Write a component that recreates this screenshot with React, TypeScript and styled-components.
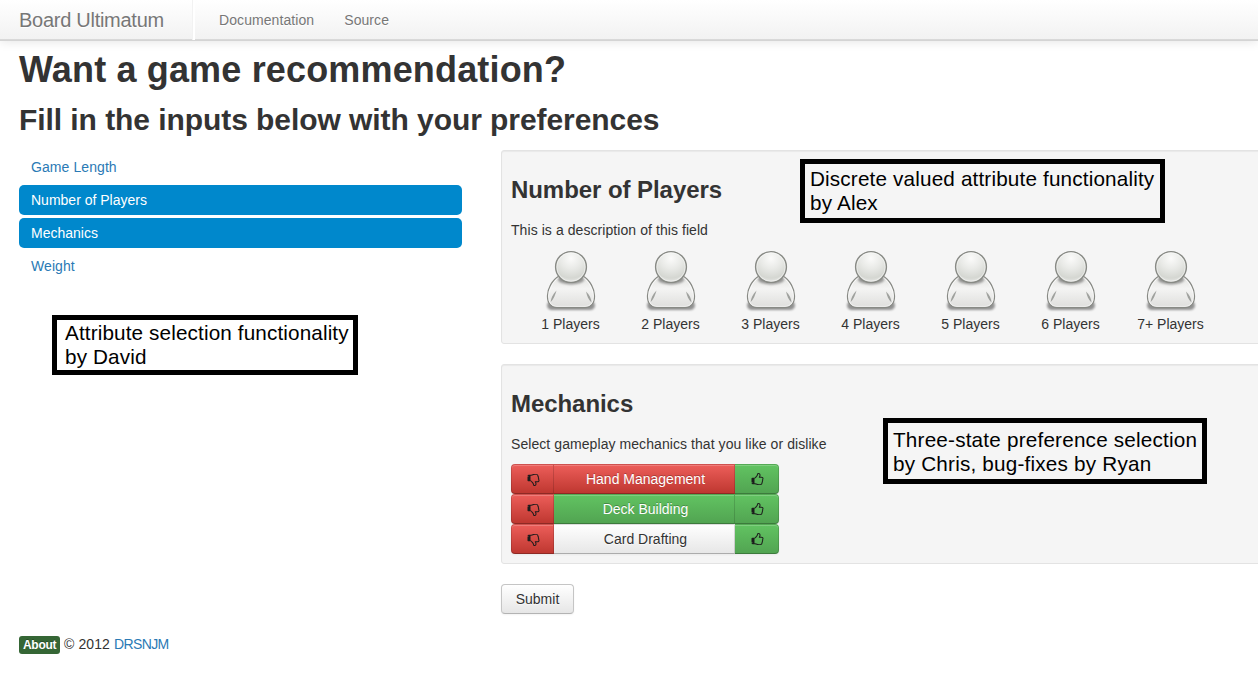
import React from "react";
import styled, { createGlobalStyle, css } from "styled-components";

const GlobalStyle = createGlobalStyle`
  *, *::before, *::after { box-sizing: border-box; }
  html, body { margin: 0; overflow: hidden; }
  body {
    background: #fff;
    color: #333;
    font-family: "Liberation Sans", Arial, sans-serif;
    font-size: 14px;
    line-height: 20px;
  }
  h1, h2, h3, p, ul { margin: 0; padding: 0; }
`;

const Page = styled.div`
  position: relative;
  width: 1258px;
  height: 697px;
  overflow: hidden;
`;

const Navbar = styled.nav`
  display: flex;
  height: 41px;
  background: linear-gradient(to bottom, #fff, #f2f2f2);
  border-bottom: 1px solid #d4d4d4;
  box-shadow: 0 1px 10px rgba(0, 0, 0, 0.1), inset 0 -1px 0 rgba(0, 0, 0, 0.1);
`;

const Brand = styled.a`
  width: 195px;
  padding: 10px 0 0 19px;
  border-right: 2px solid #fff;
  box-shadow: inset -1px 0 0 #f2f2f2;
  color: #777;
  font-size: 20px;
  letter-spacing: -0.27px;
  text-shadow: 0 1px 0 #fff;
  white-space: nowrap;
`;

const NavLink = styled.a`
  padding: 10px 15px;
  color: #777;
  letter-spacing: 0.08px;
  text-shadow: 0 1px 0 #fff;
  &:first-of-type { padding-left: 24px; }
`;

const NavLinks = styled.div`
  display: flex;
`;

const Content = styled.main`
  padding: 9px 0 0 19px;
`;

const Title = styled.h1`
  font-size: 36px;
  line-height: 40px;
  letter-spacing: 0.16px;
  white-space: nowrap;
`;

const Subtitle = styled.h2`
  margin-top: 10px;
  font-size: 30px;
  line-height: 40px;
  letter-spacing: -0.065px;
  white-space: nowrap;
`;

const Columns = styled.div`
  display: grid;
  grid-template-columns: 443px 780px;
  column-gap: 39px;
  margin-top: 10px;
`;

const Pills = styled.ul`
  display: flex;
  flex-direction: column;
  gap: 3px;
  margin-top: 2px;
  list-style: none;
`;

const Pill = styled.li<{ $active?: boolean }>`
  height: 30px;
  padding: 5px 12px;
  border-radius: 5px;
  color: ${(p) => (p.$active ? "#fff" : "#2a7ab5")};
  background: ${(p) => (p.$active ? "#0088cc" : "transparent")};
  letter-spacing: ${(p) => (p.$active ? "0" : "0.08px")};
`;

const Form = styled.form`
  display: flex;
  flex-direction: column;
  align-items: flex-start;
`;

const Well = styled.section<{ $height: number }>`
  width: 100%;
  height: ${(p) => p.$height}px;
  margin-bottom: 20px;
  padding: 19px 9px 0;
  border: 1px solid #e3e3e3;
  border-radius: 3px;
  background: #f5f5f5;
  box-shadow: inset 0 1px 1px rgba(0, 0, 0, 0.05);
`;

const WellTitle = styled.h3`
  font-size: 24px;
  line-height: 40px;
  letter-spacing: -0.06px;
`;

const Description = styled.p`
  margin-top: 10px;
  letter-spacing: 0.07px;
`;

const Players = styled.div`
  display: flex;
  margin: 10px 0 0 10px;
`;

const Player = styled.div`
  display: flex;
  flex-direction: column;
  align-items: center;
  width: 100px;
  svg { display: block; }
`;

const PlayerLabel = styled.span`
  padding-right: 1px;
`;

const Mechanics = styled.div`
  margin-top: 10px;
`;

const MechanicRow = styled.div`
  display: grid;
  grid-template-columns: 43px 181px 44px;
  height: 30px;
`;

type Tone = "red" | "green" | "plain";

const tones = {
  red: css`
    color: #fff;
    background: linear-gradient(to bottom, #ee5f5b, #bd362f);
    text-shadow: 0 -1px 0 rgba(0, 0, 0, 0.25);
  `,
  green: css`
    color: #fff;
    background: linear-gradient(to bottom, #62c462, #51a351);
    text-shadow: 0 -1px 0 rgba(0, 0, 0, 0.25);
  `,
  plain: css`
    color: #333;
    background: linear-gradient(to bottom, #fff, #e6e6e6);
    text-shadow: 0 1px 1px rgba(255, 255, 255, 0.75);
  `,
};

const MechanicCell = styled.div<{ $tone: Tone; $side?: "left" | "right" }>`
  display: flex;
  align-items: center;
  justify-content: center;
  padding-left: ${(p) => (p.$side ? 0 : 3)}px;
  border: 1px solid rgba(0, 0, 0, 0.13);
  border-bottom-color: rgba(0, 0, 0, 0.25);
  border-left-width: ${(p) => (p.$side === "left" ? 1 : 0)}px;
  border-radius: ${(p) =>
    p.$side === "left" ? "4px 0 0 4px" : p.$side === "right" ? "0 4px 4px 0" : "0"};
  box-shadow: inset 0 1px 0 rgba(255, 255, 255, 0.2), 0 1px 2px rgba(0, 0, 0, 0.05);
  ${(p) => tones[p.$tone]}
  background-origin: border-box;
`;

const SubmitButton = styled.button`
  width: 73px;
  height: 30px;
  padding: 0;
  border: 1px solid #c5c5c5;
  border-bottom-color: #b3b3b3;
  border-radius: 4px;
  box-shadow: inset 0 1px 0 rgba(255, 255, 255, 0.2), 0 1px 2px rgba(0, 0, 0, 0.05);
  font: inherit;
  ${tones.plain}
`;

const Footer = styled.footer`
  display: flex;
  align-items: center;
  gap: 4px;
  margin-top: 20px;
`;

const AboutBadge = styled.a`
  width: 41px;
  height: 18px;
  margin-top: 2px;
  padding: 2px 0 2px 4px;
  border-radius: 3px;
  background: #356635;
  color: #fff;
  font-size: 12px;
  font-weight: bold;
  letter-spacing: -0.3px;
  line-height: 14px;
  text-shadow: 0 -1px 0 rgba(0, 0, 0, 0.25);
`;

const Copyright = styled.span`
  letter-spacing: 0.1px;
`;

const TeamLink = styled.a`
  color: #2a7ab5;
  letter-spacing: -0.6px;
`;

const Note = styled.aside<{
  $x: number;
  $y: number;
  $w: number;
  $h: number;
  $pad: string;
  $tracking: number;
}>`
  position: absolute;
  left: ${(p) => p.$x}px;
  top: ${(p) => p.$y}px;
  width: ${(p) => p.$w}px;
  height: ${(p) => p.$h}px;
  padding: ${(p) => p.$pad};
  border: 5px solid #000;
  color: #000;
  font-size: 20.7px;
  line-height: 24px;
  letter-spacing: ${(p) => p.$tracking}px;
  white-space: nowrap;
`;

const PersonIcon = () => (
  <svg width="60" height="64" viewBox="0 0 60 64">
    <defs>
      <radialGradient id="head" cx="0.5" cy="0.22" r="0.75">
        <stop offset="0" stopColor="#fbfbfa" />
        <stop offset="0.45" stopColor="#e9eae7" />
        <stop offset="0.85" stopColor="#d5d7d2" />
        <stop offset="1" stopColor="#e4e5e2" />
      </radialGradient>
      <linearGradient id="torso" x1="0" y1="0" x2="0" y2="1">
        <stop offset="0" stopColor="#e2e2e0" />
        <stop offset="0.4" stopColor="#f4f4f3" />
        <stop offset="1" stopColor="#dededc" />
      </linearGradient>
      <filter id="soft" x="-20%" y="-60%" width="140%" height="220%">
        <feGaussianBlur stdDeviation="1.3" />
      </filter>
      <clipPath id="torsoClip">
        <path d="M18 26C11 30 6.500 39 6.500 46C6.500 53 10 57.500 16 57.500H44C50 57.500 53.500 53 53.500 46C53.500 39 49 30 42 26Z" />
      </clipPath>
    </defs>
    <rect x="6" y="51" width="48" height="9" rx="5" fill="#000" opacity="0.4" filter="url(#soft)" />
    <path
      d="M18 26C11 30 6.500 39 6.500 46C6.500 53 10 57.500 16 57.500H44C50 57.500 53.500 53 53.500 46C53.500 39 49 30 42 26Z"
      fill="url(#torso)"
      stroke="#888a85"
      strokeWidth="1.3"
    />
    <path
      d="M18 27.500C12 31.500 7.600 39.500 7.600 46C7.600 52.500 10.500 56.400 16 56.400H44C49.500 56.400 52.400 52.500 52.400 46C52.400 39.500 48 31.500 42 27.500"
      fill="none"
      stroke="#fff"
      strokeOpacity="0.7"
    />
    <g clipPath="url(#torsoClip)">
      <ellipse cx="30" cy="29.500" rx="13" ry="5" fill="#000" opacity="0.35" filter="url(#soft)" />
    </g>
    <path
      d="M15.500 40.500C11.500 44.500 10 48.500 9.700 52C12.500 49.500 14.300 45 15.500 40.500ZM45 41.500C46 46 47.500 50 50.500 52.500C50.300 48.500 48.500 44.500 45 41.500Z"
      fill="#777975"
      opacity="0.65"
    />
    <circle cx="30" cy="17" r="15.400" fill="url(#head)" stroke="#888a85" strokeWidth="1.4" />
    <circle cx="30" cy="17" r="14.200" fill="none" stroke="#fff" strokeOpacity="0.4" />
  </svg>
);

const ThumbGlyph = styled.svg<{ $down?: boolean }>`
  display: block;
  width: 14px;
  height: 13px;
  fill: #1c1c1c;
  transform: ${(p) => (p.$down ? "scaleY(-1)" : "none")};
`;

const ThumbIcon = ({ down }: { down?: boolean }) => (
  <ThumbGlyph viewBox="0 0 1792 1792" preserveAspectRatio="none" $down={down}>
    <path d="M320 1344q0-26-19-45t-45-19-45 19-19 45 19 45 45 19 45-19 19-45zm1280-576q0-51-39-89.500t-89-38.500h-352q0-58 48-159.500t48-160.500q0-98-32-145t-128-47q-26 26-38 85t-30.500 125.500-59.500 109.500q-22 23-77 91-4 5-23 30t-31.500 41-34.500 42.500-40 44-38.500 35.500-40 27-35.500 9h-32v640h32q13 0 31.500 3t33 6.500 38 11 35 11.500 35.500 12.500 29 10.500q211 73 342 73h121q192 0 192-167 0-26-5-56 30-16 47.500-52.500t17.500-73.500-18-69q53-50 53-119 0-25-10-55.500t-25-47.500q32-1 53.500-47t21.500-81zm128-1q0 89-49 163 9 33 9 69 0 77-38 144 3 21 3 43 0 101-60 178 1 139-85 219.500t-227 80.500h-129q-96 0-189.500-22.500t-216.500-65.500q-116-40-138-40h-288q-53 0-90.500-37.500t-37.500-90.500v-640q0-53 37.500-90.500t90.500-37.500h274q36-24 137-155 58-75 107-128 24-25 35.500-85.500t30.500-126.500 62-108q39-37 90-37 84 0 151 32.500t102 101.500 35 186q0 93-48 192h176q104 0 180 76t76 179z" />
  </ThumbGlyph>
);

const playerCounts = ["1", "2", "3", "4", "5", "6", "7+"];

const mechanics: { name: string; tone: Tone }[] = [
  { name: "Hand Management", tone: "red" },
  { name: "Deck Building", tone: "green" },
  { name: "Card Drafting", tone: "plain" },
];

export default function App() {
  return (
    <Page>
      <GlobalStyle />
      <Navbar>
        <Brand>Board Ultimatum</Brand>
        <NavLinks>
          <NavLink>Documentation</NavLink>
          <NavLink>Source</NavLink>
        </NavLinks>
      </Navbar>
      <Content>
        <Title>Want a game recommendation?</Title>
        <Subtitle>Fill in the inputs below with your preferences</Subtitle>
        <Columns>
          <Pills>
            <Pill>Game Length</Pill>
            <Pill $active>Number of Players</Pill>
            <Pill $active>Mechanics</Pill>
            <Pill>Weight</Pill>
          </Pills>
          <Form>
            <Well $height={194}>
              <WellTitle>Number of Players</WellTitle>
              <Description>This is a description of this field</Description>
              <Players>
                {playerCounts.map((n) => (
                  <Player key={n}>
                    <PersonIcon />
                    <PlayerLabel>{n} Players</PlayerLabel>
                  </Player>
                ))}
              </Players>
            </Well>
            <Well $height={200}>
              <WellTitle>Mechanics</WellTitle>
              <Description>Select gameplay mechanics that you like or dislike</Description>
              <Mechanics>
                {mechanics.map((m) => (
                  <MechanicRow key={m.name}>
                    <MechanicCell $tone="red" $side="left">
                      <ThumbIcon down />
                    </MechanicCell>
                    <MechanicCell $tone={m.tone}>{m.name}</MechanicCell>
                    <MechanicCell $tone="green" $side="right">
                      <ThumbIcon />
                    </MechanicCell>
                  </MechanicRow>
                ))}
              </Mechanics>
            </Well>
            <SubmitButton type="button">Submit</SubmitButton>
          </Form>
        </Columns>
        <Footer>
          <AboutBadge>About</AboutBadge>
          <Copyright>
            © 2012 <TeamLink>DRSNJM</TeamLink>
          </Copyright>
        </Footer>
      </Content>
      <Note $x={52} $y={315} $w={306} $h={60} $pad="1px 0 0 8px" $tracking={0.13}>
        Attribute selection functionality
        <br />
        by David
      </Note>
      <Note $x={800} $y={159} $w={365} $h={64} $pad="3px 0 0 5px" $tracking={0.16}>
        Discrete valued attribute functionality
        <br />
        by Alex
      </Note>
      <Note $x={883} $y={418} $w={324} $h={66} $pad="5px 0 0 5px" $tracking={0.2}>
        Three-state preference selection
        <br />
        by Chris, bug-fixes by Ryan
      </Note>
    </Page>
  );
}
